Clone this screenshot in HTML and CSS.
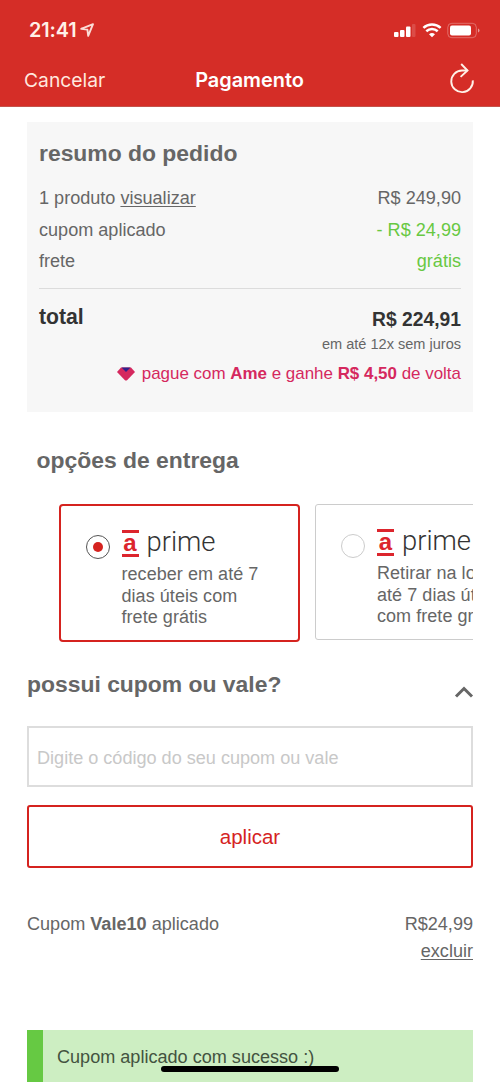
FILE: index.html
```html
<!DOCTYPE html>
<html lang="pt-BR">
<head>
<meta charset="utf-8">
<title>Pagamento</title>
<link rel="stylesheet" href="styles.css">
</head>
<body>
<div class="screen">
  <header class="header">
    <div class="status">
      <div class="clock"><span class="time">21:41</span>
        <svg class="location" width="15" height="14" viewBox="0 0 15 14"><path d="M1.200 5.800 13 1.200 8.200 12.800 7.400 6.600Z" fill="none" stroke="#fbdcd6" stroke-width="1.900" stroke-linejoin="round"/></svg>
      </div>
      <svg class="indicators" width="88" height="18" viewBox="0 0 88 18">
        <g fill="#fff"><rect x="1" y="11" width="4.500" height="5" rx="1"/><rect x="7" y="9" width="4.500" height="7" rx="1"/><rect x="13" y="5.500" width="4.500" height="10.500" rx="1"/><rect x="19" y="3" width="3.500" height="13" rx="1" opacity=".15"/></g>
        <g fill="none" stroke="#fff" stroke-width="2.500"><path d="M30.400 6.800a12.600 12.600 0 0 1 17.200 0"/><path d="M33.300 10.300a8.500 8.500 0 0 1 11.400 0"/></g>
        <path d="M36 13.300a4.500 4.500 0 0 1 6 0l-3 3Z" fill="#fff"/>
        <rect x="54.800" y="2.300" width="28.500" height="14.400" rx="4" fill="none" stroke="#fff" stroke-opacity=".3"/>
        <rect x="57" y="4.500" width="21" height="10" rx="2" fill="#fff"/>
        <path d="M85 7.500v4q1.500-.5 1.500-2t-1.500-2" fill="#fff" opacity=".5"/>
      </svg>
    </div>
    <nav class="nav">
      <span class="cancel">Cancelar</span>
      <span class="title">Pagamento</span>
      <svg class="reload" width="26" height="32" viewBox="0 0 26 32"><g fill="none" stroke="#fff1e8" stroke-width="1.900"><path d="M23.800 17.300A10.800 10.800 0 1 1 13 7.500h5.500"/><path d="M12.200 1 18.500 7.500 11.600 13.900"/></g></svg>
    </nav>
  </header>

  <main class="content">
    <section class="summary">
      <h2 class="summary-heading">resumo do pedido</h2>
      <div class="row"><span>1 produto <a class="link">visualizar</a></span><span>R$ 249,90</span></div>
      <div class="row"><span>cupom aplicado</span><span class="green">- R$ 24,99</span></div>
      <div class="row"><span>frete</span><span class="green">grátis</span></div>
      <div class="total"><span class="total-label">total</span><span class="total-value">R$ 224,91</span></div>
      <div class="installments">em até 12x sem juros</div>
      <div class="cashback">
        <svg width="18" height="14" viewBox="0 0 18 14"><path d="M4 .5h10l4 4.500-7.700 8q-1.300 1.200-2.600 0L0 5Z" fill="#d5285e"/><path d="M4.500 .5h9L9 5Z" fill="#30208a"/></svg>
        <span>pague com <b>Ame</b> e ganhe <b>R$ 4,50</b> de volta</span>
      </div>
    </section>

    <h2 class="delivery-heading">opções de entrega</h2>
    <div class="options">
      <div class="option selected">
        <span class="radio"></span>
        <div class="option-body">
          <div class="brand"><span class="brand-a">a</span><span class="prime">prime</span></div>
          <p class="option-text">receber em até 7<br>dias úteis com<br>frete grátis</p>
        </div>
      </div>
      <div class="option">
        <span class="radio"></span>
        <div class="option-body">
          <div class="brand"><span class="brand-a">a</span><span class="prime">prime</span></div>
          <p class="option-text">Retirar na loja em<br>até 7 dias úteis<br>com frete grátis</p>
        </div>
      </div>
    </div>

    <div class="coupon-heading"><h2>possui cupom ou vale?</h2>
      <svg class="chevron" width="20" height="14" viewBox="0 0 20 14"><path d="M2 11.500 10 3.500l8 8" fill="none" stroke="#666" stroke-width="3"/></svg>
    </div>
    <input class="code" type="text" placeholder="Digite o código do seu cupom ou vale">
    <button class="apply">aplicar</button>
    <div class="applied"><span>Cupom <b>Vale10</b> aplicado</span><span class="applied-value">R$24,99<br><a class="link">excluir</a></span></div>
    <div class="success">Cupom aplicado com sucesso :)</div>
  </main>
  <div class="home-indicator"></div>
</div>
</body>
</html>
```
FILE: styles.css
```css
* { box-sizing: border-box; }
body { margin: 0; background: #fff; }
h2, p { margin: 0; }
svg { display: block; flex: none; }

.screen {
  position: relative;
  width: 500px;
  height: 1082px;
  overflow: hidden;
  color: #666;
  font: 18.080px/26px "Liberation Sans", Arial, sans-serif;
}

.header {
  height: 107px;
  background: #d52d27;
  border-bottom: 1px solid #c4534b;
  color: #fff;
  font-family: Inter, sans-serif;
}
.status {
  display: flex;
  justify-content: space-between;
  padding: 18px 19px 0 29px;
  height: 58px;
}
.clock { display: flex; gap: 4px; line-height: 25px; }
.time { font-size: 19.800px; font-weight: 600; color: #fff1e8; letter-spacing: -.1px; }
.location { margin-top: 5px; }
.indicators { margin: 3px 0 0; }
.nav {
  display: grid;
  grid-template-columns: 1fr auto 1fr;
  align-items: center;
  padding: 0 25px 0 24px;
  height: 44px;
  font-size: 19.300px;
}
.cancel { color: #ffe8df; }
.title { font-size: 19.900px; font-weight: 600; }
.reload { justify-self: end; margin-top: -3px; }

.content { padding: 15px 27px 0; }
.summary {
  height: 290px;
  padding: 17px 12px 0 12px;
  background: #f7f7f7;
}
h2 { font-size: 22.900px; line-height: 28px; color: #666; }
.summary-heading { margin-bottom: 16px; }
.row { display: flex; justify-content: space-between; height: 31.500px; line-height: 31.500px; }
.link { text-decoration: underline; text-decoration-thickness: 1px; text-underline-offset: 2px; }
.green { color: #68c842; }
.total {
  display: flex;
  justify-content: space-between;
  margin-top: 10px;
  padding-top: 14px;
  border-top: 1px solid #dcdcdc;
  color: #333;
  font-weight: bold;
}
.total-label { font-size: 21.200px; line-height: 28px; }
.total-value { font-size: 19.300px; line-height: 34px; }
.installments { font-size: 14.550px; line-height: 14px; text-align: right; }
.cashback {
  display: flex;
  justify-content: flex-end;
  align-items: center;
  gap: 7px;
  margin-top: 10px;
  color: #d5285e;
  font-size: 16.950px;
}

.delivery-heading { margin: 34px 0 30px 9.500px; }
.options {
  display: flex;
  align-items: flex-start;
  gap: 15px;
  padding-left: 32px;
  overflow: hidden;
}
.option {
  display: flex;
  flex: none;
  gap: 12px;
  width: 241px;
  height: 136px;
  padding: 22px 0 0 25px;
  border: 1px solid #ccc;
  border-radius: 3px;
}
.option.selected { height: 138px; padding-left: 24.500px; border: 2px solid #d5231f; border-radius: 4px; }
.radio {
  display: grid;
  place-items: center;
  width: 24px;
  height: 24px;
  margin-top: 7px;
  border: 1px solid #ccc;
  border-radius: 50%;
}
.selected .radio { border-color: #555; }
.selected .radio::after { content: ""; width: 10px; height: 10px; border-radius: 50%; background: #d5231f; }
.brand { display: flex; gap: 8px; height: 36px; }
.brand-a {
  width: 17px;
  height: 27px;
  margin-top: 2px;
  border: solid #dc252d;
  border-width: 3px 0;
  color: #dc252d;
  font: bold 24px/19px "Liberation Sans", Arial, sans-serif;
  text-align: center;
}
.prime { margin-top: 1px; color: #333; font: 300 27.400px/27px Roboto, sans-serif; }
.option-text { font-size: 18px; line-height: 21.700px; letter-spacing: .05px; white-space: nowrap; }

.coupon-heading { display: flex; justify-content: space-between; margin-top: 28px; }
.chevron { margin-top: 15px; margin-right: -1px; }
.code {
  display: block;
  width: 100%;
  height: 61px;
  margin-top: 27px;
  padding: 3px 8px 0;
  border: 2px solid #ddd;
  font: 18.080px "Liberation Sans", Arial, sans-serif;
}
.code::placeholder { color: #c8c8c8; opacity: 1; }
.apply {
  display: block;
  width: 100%;
  height: 63px;
  margin-top: 18px;
  padding: 0;
  border: 2px solid #d5231f;
  border-radius: 3px;
  background: #fff;
  color: #d5231f;
  font: 20.500px "Liberation Sans", Arial, sans-serif;
}
.applied { display: flex; justify-content: space-between; height: 53px; margin-top: 43px; }
.applied-value { text-align: right; line-height: 27px; }
.success {
  height: 60px;
  margin-top: 66px;
  padding: 14px;
  border-left: 16px solid #66c943;
  background: #cdeec2;
  color: #435340;
}
.home-indicator {
  position: absolute;
  left: 161px;
  top: 1066px;
  width: 178px;
  height: 6px;
  border-radius: 3px;
  background: #000;
}
```
